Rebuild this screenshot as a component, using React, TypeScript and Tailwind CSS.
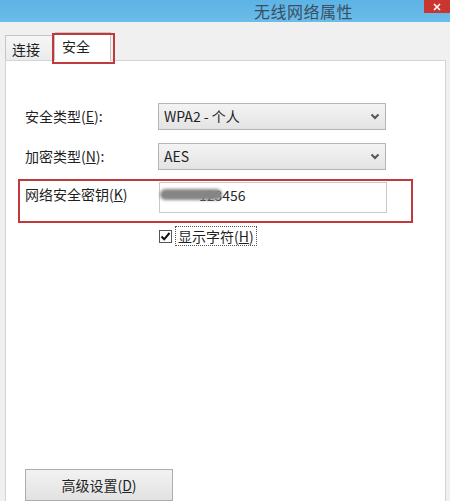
import React from "react";

const cjk = { fontFamily: '"Noto Sans CJK SC", "Noto Sans", sans-serif' };

function Chevron() {
  return (
    <svg width="10" height="7" viewBox="0 0 10 7" className="shrink-0">
      <polyline points="1.5,1.5 5,5 8.5,1.5" fill="none" stroke="#555" strokeWidth="2" />
    </svg>
  );
}

function Dropdown({ value }: { value: string }) {
  return (
    <div className="flex items-center justify-between w-[228px] h-[27px] border border-[#b5b5b5] bg-gradient-to-b from-[#f3f3f3] to-[#e4e4e4] pl-[5px] pr-[5px]">
      <span className="text-[14px] text-[#1f1f1f]">{value}</span>
      <Chevron />
    </div>
  );
}

export default function App() {
  return (
    <div
      className="w-[450px] h-[501px] overflow-hidden bg-[#f0f0f0] flex flex-col"
      style={cjk}
    >
      {/* Title bar */}
      <div className="h-[22px] shrink-0 flex items-start bg-gradient-to-b from-[#5db3e4] to-[#6bbde9]">
        <div className="pl-[254px] pt-[1px] text-[16px] leading-[20px] tracking-[0.5px] text-[#3b4f63]">
          无线网络属性
        </div>
        <div className="ml-auto w-[26px] h-[13px] bg-[#c9352f] flex items-center justify-center">
          <svg width="8" height="8" viewBox="0 0 8 8">
            <path d="M1 1 L7 7 M7 1 L1 7" stroke="#fff" strokeWidth="1.6" />
          </svg>
        </div>
      </div>

      {/* Tabs */}
      <div className="flex items-end pl-[5px] pt-[9px] h-[38px] shrink-0">
        <div className="w-[50px] h-[25px] border border-[#c6c6c6] border-b-0 bg-gradient-to-b from-[#f6f6f6] to-[#ebebeb] pl-[6px] text-[14px] leading-[26px] text-[#1f1f1f]">
          连接
        </div>
        <div className="relative w-[56px] h-[29px] border border-[#c6c6c6] border-b-0 border-l-0 bg-white pl-[7px] text-[14px] leading-[26px] text-[#1f1f1f] -mb-px z-10">
          安全
          <div className="absolute -left-[3px] top-0 w-[63px] h-[31px] border-2 border-[#c2393c]" />
        </div>
      </div>

      {/* Panel */}
      <div className="ml-[5px] w-[441px] flex-1 border border-[#d4d4d4] bg-white pl-[19px] pt-[42px] flex flex-col">
        <div className="flex items-center h-[27px]">
          <span className="w-[133px] text-[14px] text-[#1f1f1f]">安全类型(<u>E</u>):</span>
          <Dropdown value="WPA2 - 个人" />
        </div>
        <div className="flex items-center h-[27px] mt-[13px]">
          <span className="w-[133px] text-[14px] text-[#1f1f1f]">加密类型(<u>N</u>):</span>
          <Dropdown value="AES" />
        </div>

        <div className="relative flex items-center h-[31px] mt-[12px]">
          <div className="absolute -left-[7px] -top-[3px] w-[395px] h-[44px] border-2 border-[#c2393c]" />
          <span className="w-[134px] -mt-[6px] text-[14px] text-[#1f1f1f]">网络安全密钥(<u>K</u>)</span>
          <div className="relative w-[228px] h-[31px] border border-[#c9c9c9] bg-white pl-[39px] text-[14px] leading-[24px] text-[#2a2a2a]">
            123456
            <div className="absolute left-[0px] top-[6px] w-[62px] h-[11px] rounded-full bg-[#858585] blur-[1.5px]" />
          </div>
        </div>

        <div className="flex items-center h-[20px] mt-[13px] ml-[134px]">
          <div className="w-[13px] h-[13px] border border-[#555] bg-white flex items-center justify-center">
            <svg width="11" height="11" viewBox="0 0 11 11">
              <polyline points="1.5,5.5 4.2,8.3 9.5,2" fill="none" stroke="#111" strokeWidth="2" />
            </svg>
          </div>
          <div className="ml-[3px] px-[2px] h-[20px] border border-dotted border-[#555] text-[14px] leading-[18px] text-[#1f1f1f]">
            显示字符(<u>H</u>)
          </div>
        </div>

        <div className="mt-[223px] w-[148px] h-[32px] border border-[#adadad] bg-gradient-to-b from-[#f2f2f2] to-[#e2e2e2] flex items-center justify-center text-[14px] text-[#1f1f1f]">
          高级设置(<u>D</u>)
        </div>
      </div>
    </div>
  );
}
